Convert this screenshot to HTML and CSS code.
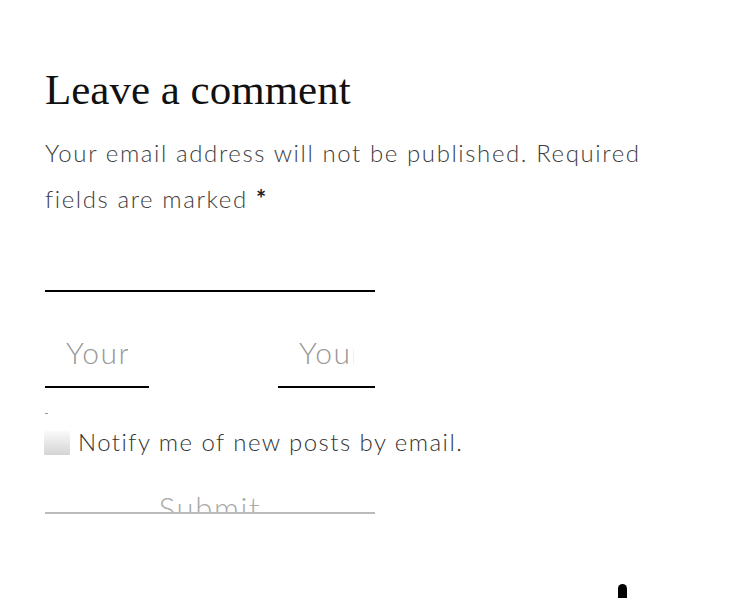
FILE: index.html
```html
<!DOCTYPE html>
<html lang="en">

<head>
    <meta charset="UTF-8">
    <meta name="viewport" content="width=device-width, initial-scale=1.0">
    <title>Leave a comment</title>
    <link rel="stylesheet" href="styles.css">
</head>

<body>

    <div class="comment-respond">
        <h3 class="reply-title">Leave a comment</h3>

        <p class="notes">Your email address will not be published. Required fields are marked <span class="required">*</span></p>

        <form class="comment-form" onsubmit="return false;">
            <div class="field field-comment">
                <input type="text" name="comment" />
            </div>

            <div class="field-row">
                <div class="field field-author">
                    <input type="text" name="author" placeholder="Your Name*" />
                </div>
                <div class="field field-email">
                    <input type="text" name="email" placeholder="Your Email*" />
                </div>
            </div>

            <span class="hidden-mark"></span>

            <label class="subscribe">
                <input type="checkbox" name="subscribe" />
                Notify me of new posts by email.
            </label>

            <div class="form-submit">
                <button type="submit">Submit</button>
            </div>
        </form>
    </div>

    <div class="corner-shape"></div>

</body>

</html>
```

FILE: styles.css
```css
body {
    margin: 0;
    background-color: #fff;
    font-family: Lato, "Noto Sans", sans-serif;
    height: 598px;
    overflow: hidden;
    position: relative;
}

.comment-respond {
    padding: 62px 0 0 45px;
}

.reply-title {
    font-family: "Liberation Serif", "DejaVu Serif", serif;
    font-weight: normal;
    font-size: 43px;
    line-height: 56px;
    color: #111;
    margin: 0;
}

.notes {
    font-size: 24px;
    font-weight: 300;
    line-height: 46px;
    letter-spacing: 1.6px;
    color: #3d3d3d;
    margin: 12px 0 0;
    width: 660px;
}

.notes .required {
    color: #222;
    font-weight: bold;
}

.comment-form {
    width: 330px;
}

.field input {
    display: block;
    width: 100%;
    box-sizing: border-box;
    border: none;
    border-bottom: 2px solid #000;
    padding: 0 21px 6px;
    height: 64px;
    font-family: Lato, "Noto Sans", sans-serif;
    font-size: 30px;
    font-weight: 300;
    letter-spacing: 1.5px;
    color: #333;
    background: transparent;
    outline: none;
}

.field input::placeholder {
    color: #999;
}

.field-comment {
    margin-top: 6px;
}

.field-row {
    display: flex;
    justify-content: space-between;
    margin-top: 32px;
}

.field-author {
    width: 104px;
}

.field-email {
    width: 97px;
}

.hidden-mark {
    display: block;
    width: 3px;
    height: 1px;
    background-color: #999;
    margin-top: 25px;
}

.subscribe {
    display: flex;
    align-items: center;
    margin-top: 13px;
    font-size: 24px;
    font-weight: 300;
    letter-spacing: 1.45px;
    color: #333;
    white-space: nowrap;
}

.subscribe input {
    appearance: none;
    -webkit-appearance: none;
    flex-shrink: 0;
    width: 26px;
    height: 24px;
    margin: 3px 8px 0 -1px;
    border: none;
    border-radius: 1px;
    background: linear-gradient(#fafafa, #d4d4d4);
}

.form-submit {
    margin-top: 38px;
    height: 18px;
    overflow: hidden;
    border-bottom: 2px solid #bbb;
}

.form-submit button {
    display: block;
    width: 100%;
    border: none;
    background: transparent;
    padding: 0;
    font-family: Lato, "Noto Sans", sans-serif;
    font-size: 31px;
    font-weight: 300;
    letter-spacing: 1.6px;
    line-height: 28px;
    color: #aaa;
    cursor: pointer;
}

.corner-shape {
    position: absolute;
    left: 618px;
    top: 584px;
    width: 9px;
    height: 22px;
    background-color: #000;
    border-radius: 5px 5px 0 0;
}
```
